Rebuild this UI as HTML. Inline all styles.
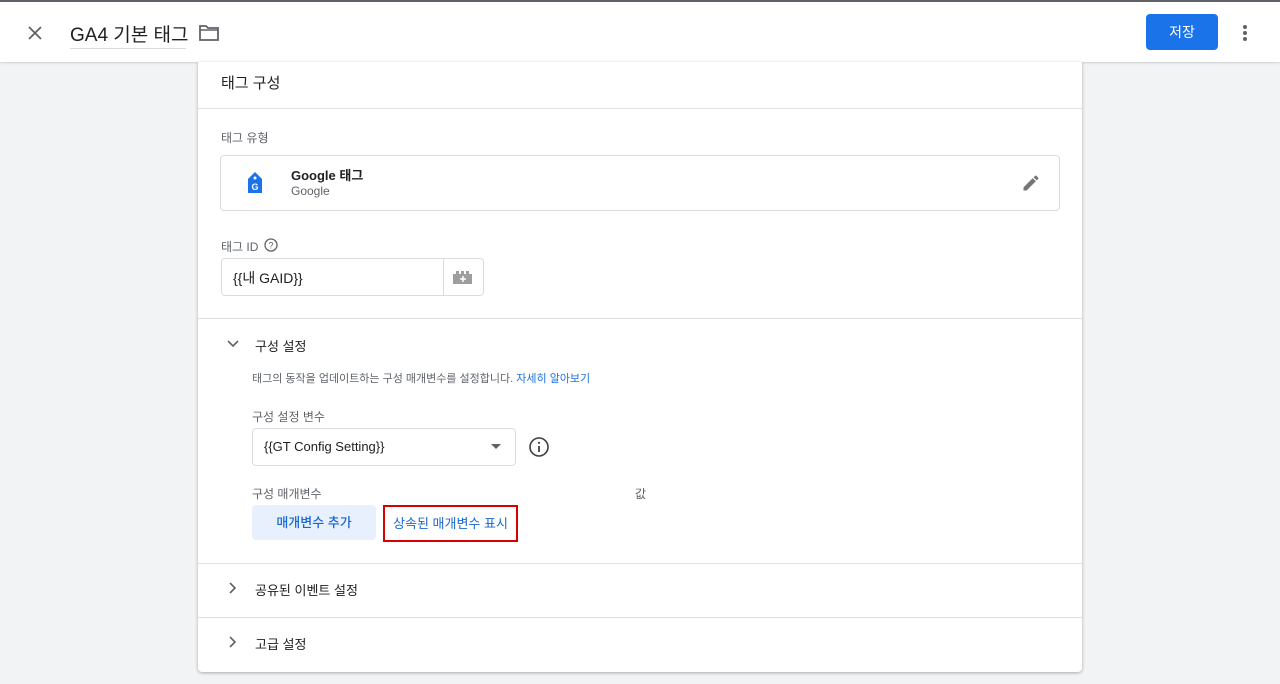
<!DOCTYPE html>
<html><head><meta charset="utf-8"><style>
*{margin:0;padding:0;box-sizing:border-box}
body{width:1280px;height:684px;background:#f1f3f4;font-family:"Liberation Sans","Noto Sans CJK KR",sans-serif;color:#202124;position:relative;overflow:hidden}
.a{position:absolute}
.top{left:0;top:0;width:1280px;height:62px;background:#fff;border-top:2px solid #5f6368;box-shadow:0 1px 2px rgba(0,0,0,.15)}
.card{left:198px;top:62px;width:884px;height:610px;background:#fff;box-shadow:0 1px 3px rgba(0,0,0,.3);border-radius:0 0 4px 4px}
.hr{left:0;width:884px;height:1px;background:#e0e0e0}
.lbl{font-size:12px;color:#5f6368}
</style></head><body>
<div class="a top">
 <svg class="a" style="left:27px;top:23px" width="16" height="16" viewBox="0 0 16 16"><path d="M2 2L14 14M14 2L2 14" stroke="#5f6368" stroke-width="1.8"/></svg>
 <div class="a" style="left:70px;top:18px;font-size:19px;color:#202124">GA4 기본 태그</div>
 <div class="a" style="left:70px;top:46px;width:116px;height:1px;background:#dadce0"></div>
 <svg class="a" style="left:198px;top:22px" width="22" height="18" viewBox="0 0 22 18"><path d="M2 2h6l2 2h10v12H2z" fill="none" stroke="#5f6368" stroke-width="1.8"/><path d="M2 6h18" stroke="#5f6368" stroke-width="1.5"/></svg>
 <div class="a" style="left:1146px;top:12px;width:72px;height:36px;background:#1a73e8;border-radius:4px;color:#fff;font-size:14px;text-align:center;line-height:36px">저장</div>
 <svg class="a" style="left:1242px;top:22px" width="6" height="18"><circle cx="3" cy="3" r="2" fill="#5f6368"/><circle cx="3" cy="9" r="2" fill="#5f6368"/><circle cx="3" cy="15" r="2" fill="#5f6368"/></svg>
</div>
<div class="a card">
 <div class="a" style="left:23px;top:10px;font-size:15px">태그 구성</div>
 <div class="a hr" style="top:46px"></div>
 <div class="a lbl" style="left:23px;top:67px">태그 유형</div>
 <div class="a" style="left:22px;top:93px;width:840px;height:56px;border:1px solid #dadce0;border-radius:4px">
  <svg class="a" style="left:26px;top:15px" width="16" height="24" viewBox="0 0 16 24"><path d="M8 1L15 8V22H1V8Z" fill="#1a73e8"/><circle cx="8" cy="7" r="1.5" fill="#fff"/><text x="8" y="19" font-size="9" fill="#fff" text-anchor="middle" font-family="Liberation Sans" font-weight="bold">G</text></svg>
  <div class="a" style="left:70px;top:9px;font-size:13px;font-weight:bold">Google 태그</div>
  <div class="a" style="left:70px;top:28px;font-size:12px;color:#5f6368">Google</div>
  <svg class="a" style="left:800px;top:17px" width="20" height="20" viewBox="0 0 24 24"><path d="M3 17.25V21h3.75L17.81 9.94l-3.75-3.75L3 17.25zM20.71 7.04a1 1 0 000-1.41l-2.34-2.34a1 1 0 00-1.41 0l-1.83 1.83 3.75 3.75 1.83-1.83z" fill="#757575"/></svg>
 </div>
 <div class="a lbl" style="left:23px;top:176px">태그 ID</div>
 <svg class="a" style="left:66px;top:176px" width="14" height="14" viewBox="0 0 14 14"><circle cx="7" cy="7" r="6" fill="none" stroke="#5f6368" stroke-width="1.3"/><text x="7" y="10.5" font-size="9" text-anchor="middle" fill="#5f6368" font-family="Liberation Sans">?</text></svg>
 <div class="a" style="left:23px;top:196px;width:263px;height:38px;border:1px solid #dadce0;border-radius:4px">
  <div class="a" style="left:11px;top:9px;font-size:14px">{{내 GAID}}</div>
  <div class="a" style="left:221px;top:0;width:1px;height:36px;background:#dadce0"></div>
  <svg class="a" style="left:230px;top:10px" width="22" height="16" viewBox="0 0 22 16"><path d="M1 5h3V2h3v3h2V2h3v3h2V2h3v3h3v10H1z" fill="#9e9e9e"/><path d="M11 7v6M8 10h6" stroke="#fff" stroke-width="1.5"/></svg>
 </div>
 <div class="a hr" style="top:256px"></div>
 <svg class="a" style="left:29px;top:278px" width="12" height="8"><path d="M1 1l5 5 5-5" fill="none" stroke="#5f6368" stroke-width="1.6"/></svg>
 <div class="a" style="left:57px;top:274px;font-size:13px">구성 설정</div>
 <div class="a lbl" style="left:54px;top:308px;font-size:11px">태그의 동작을 업데이트하는 구성 매개변수를 설정합니다. <span style="color:#1a73e8">자세히 알아보기</span></div>
 <div class="a lbl" style="left:54px;top:346px">구성 설정 변수</div>
 <div class="a" style="left:54px;top:366px;width:264px;height:38px;border:1px solid #dadce0;border-radius:4px">
  <div class="a" style="left:11px;top:10px;font-size:13px">{{GT Config Setting}}</div>
  <svg class="a" style="left:238px;top:15px" width="10" height="6"><path d="M0 0h10L5 5z" fill="#5f6368"/></svg>
 </div>
 <svg class="a" style="left:330px;top:374px" width="22" height="22" viewBox="0 0 22 22"><circle cx="11" cy="11" r="9" fill="none" stroke="#3c4043" stroke-width="1.6"/><path d="M11 10v6" stroke="#3c4043" stroke-width="1.8"/><circle cx="11" cy="6.8" r="1.1" fill="#3c4043"/></svg>
 <div class="a lbl" style="left:54px;top:423px">구성 매개변수</div>
 <div class="a lbl" style="left:437px;top:423px">값</div>
 <div class="a" style="left:54px;top:443px;width:124px;height:35px;background:#e8f0fe;border-radius:4px;color:#1967d2;font-size:13px;text-align:center;line-height:35px;font-weight:500">매개변수 추가</div>
 <div class="a" style="left:185px;top:443px;width:135px;height:37px;border:2px solid #d50000;color:#1967d2;font-size:13px;text-align:center;line-height:33px">상속된 매개변수 표시</div>
 <div class="a hr" style="top:501px"></div>
 <svg class="a" style="left:31px;top:520px" width="8" height="12"><path d="M1 1l5 5-5 5" fill="none" stroke="#5f6368" stroke-width="1.6"/></svg>
 <div class="a" style="left:57px;top:518px;font-size:13px">공유된 이벤트 설정</div>
 <div class="a hr" style="top:555px"></div>
 <svg class="a" style="left:31px;top:574px" width="8" height="12"><path d="M1 1l5 5-5 5" fill="none" stroke="#5f6368" stroke-width="1.6"/></svg>
 <div class="a" style="left:57px;top:572px;font-size:13px">고급 설정</div>
</div>
</body></html>
